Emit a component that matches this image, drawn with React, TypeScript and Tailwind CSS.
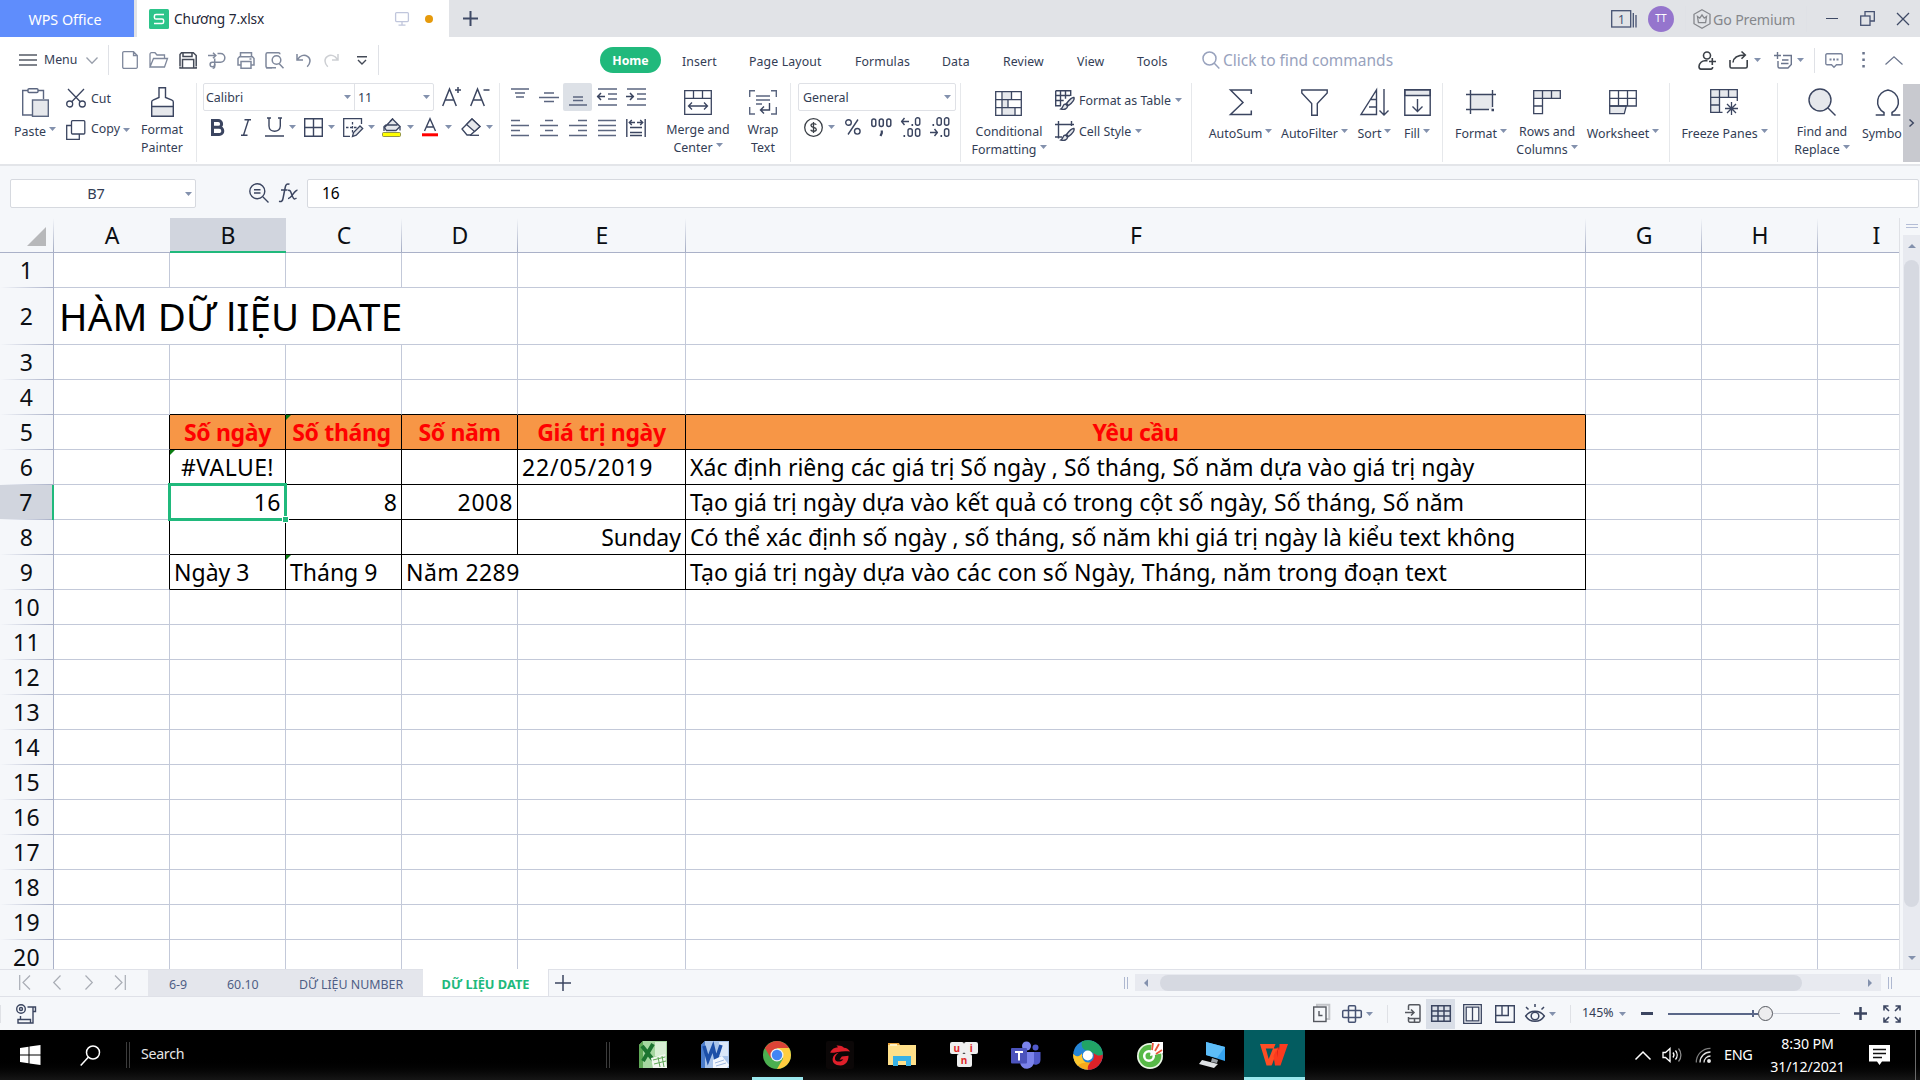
import type { ReactNode } from "react";

/* ---------- shared bits ---------- */

function Icon({ w, h, c = "#3b4560", sw = 1.3, children }: { w: number; h: number; c?: string; sw?: number; children: ReactNode }) {
  return (
    <svg width={w} height={h} viewBox={`0 0 ${w} ${h}`} fill="none" stroke={c} strokeWidth={sw} className="block shrink-0 overflow-visible">
      {children}
    </svg>
  );
}

function Caret() {
  return (
    <svg width="7" height="4" viewBox="0 0 7 4" className="block shrink-0" fill="#8391ad">
      <path d="M0 0h7L3.5 4z" />
    </svg>
  );
}

function VLine({ className = "" }: { className?: string }) {
  return <div className={`w-px shrink-0 bg-[#dfe1e6] ${className}`} />;
}

/* ---------- title bar ---------- */

function TitleBar() {
  return (
    <div className="flex h-[37px] bg-[#e1e3e7]">
      <div className="flex w-[134px] items-center justify-center bg-[#5f8dfc] pr-[4px] pt-[2px] text-[14.3px] text-white">WPS Office</div>
      <div className="ml-[3px] flex w-[312px] items-center bg-white pl-[12px]">
        <svg width="20" height="20" viewBox="0 0 20 20" className="block">
          <rect width="20" height="20" rx="1.5" fill="#2cc48a" />
          <path d="M15 5.5H7a1.6 1.6 0 0 0-1.6 1.6v1.3A1.6 1.6 0 0 0 7 10h6a1.6 1.6 0 0 1 1.6 1.6v1.3a1.6 1.6 0 0 1-1.6 1.6H5" fill="none" stroke="#fff" strokeWidth="1.5" />
        </svg>
        <span className="ml-[5px] w-[221px] pt-[2px] text-[13.7px] text-[#1f2738] tracking-[-0.08px]">Chương 7.xlsx</span>
        <Icon w={14} h={14} c="#c0c6dc">
          <rect x=".6" y=".6" width="12.8" height="9" rx="1" />
          <path d="M7 10v3M3.500 13.200h7" />
        </Icon>
        <span className="ml-[16px] size-[8px] rounded-full bg-[#e69a0b]" />
      </div>
      <div className="flex items-center pl-[14px]">
        <Icon w={15} h={15} c="#3f4a66" sw={2}>
          <path d="M7.500 0v15M0 7.500h15" />
        </Icon>
      </div>
      <div className="ml-auto flex items-center">
        <svg width="26" height="18" viewBox="0 0 26 18" className="block" fill="none" stroke="#465272" strokeWidth="1.300">
          <rect x=".7" y=".7" width="19" height="16.300" />
          <path d="M22.300 3v14.500M25 5v12.500" />
          <text x="7" y="13.500" fontSize="12" fill="#465272" stroke="none">1</text>
        </svg>
        <span className="ml-[11px] flex size-[26px] items-center justify-center rounded-full bg-[#9575cd] text-[10px] text-white">TT</span>
        <VLine className="ml-[11px] h-[25px] bg-[#c6c8cd]" />
        <span className="ml-[7px]">
          <Icon w={18} h={20} c="#85878c">
            <path d="M9 .8l8 4.500v9.400l-8 4.500-8-4.500V5.300z" />
            <path d="M4.500 7.500l2.300 1.700L9 6l2.200 3.200 2.300-1.700-.9 6.200H5.400z" />
          </Icon>
        </span>
        <span className="ml-[2px] w-[81px] whitespace-nowrap pt-[2px] text-[14.200px] text-[#85878c] tracking-[-0.15px]">Go Premium</span>
        <VLine className="ml-[12px] h-[26px] bg-[#c6c8cd]" />
        <div className="ml-[19px] h-[1.500px] w-[12px] bg-[#3f4a66]" />
        <span className="ml-[22px]">
          <Icon w={15} h={15} c="#465272">
            <rect x=".7" y="5" width="9.300" height="9.300" />
            <path d="M5 5V.7h9.300V10H10" />
          </Icon>
        </span>
        <span className="ml-[22px] mr-[11px]">
          <Icon w={12} h={12} c="#3f4a66">
            <path d="M0 0l12 12M12 0L0 12" />
          </Icon>
        </span>
      </div>
    </div>
  );
}

/* ---------- menu row ---------- */

function QuickIcon({ children }: { children: ReactNode }) {
  return <span className="flex w-[29px] shrink-0 justify-center">{children}</span>;
}

const G = "#7f889c";

function MenuRow() {
  return (
    <div className="flex h-[46px] items-center bg-white text-[12.300px] text-[#333d55]">
      <span className="ml-[19px]">
        <Icon w={18} h={12} c="#555b66">
          <path d="M0 1h18M0 6h18M0 11h18" />
        </Icon>
      </span>
      <span className="ml-[7px] w-[36px] pt-[1px]">Menu</span>
      <span className="ml-[6px]">
        <Icon w={12} h={7} c="#9aa0ac">
          <path d="M.5 .5L6 6.300 11.500.5" />
        </Icon>
      </span>
      <VLine className="ml-[10px] mr-[6px] h-[30px]" />
      <QuickIcon>
        <Icon w={16} h={18} c={G}>
          <path d="M2 .7h9.500L15.300 4.500V16a1.200 1.200 0 0 1-1.200 1.300H2A1.200 1.200 0 0 1 .7 16V2A1.200 1.200 0 0 1 2 .7zM11.500 1v3.500h3.500" />
        </Icon>
      </QuickIcon>
      <QuickIcon>
        <Icon w={19} h={16} c={G}>
          <path d="M1 15V2.200A1.500 1.500 0 0 1 2.500.7H6L8 3h7.500v3.500M1 15L4.500 6.500h14L15.500 15z" />
        </Icon>
      </QuickIcon>
      <QuickIcon>
        <Icon w={18} h={17} c="#444a57" sw={1.500}>
          <path d="M1 14V2.500L2.500.8h11.800l2.900 2.700V14M4 1v3.500h9V1M3.500 16V7.500h11.200V16zM1 14.500V16h16.200v-1.500" />
        </Icon>
      </QuickIcon>
      <QuickIcon>
        <Icon w={18} h={17} c={G} sw={1.500}>
          <path d="M0 3.500h7.500M5 .8l2.800 2.700L5 6.300M9.500 1.500h3a4.300 4.300 0 0 1 0 8.700H4.300a2.300 2.300 0 1 0 2.400 2.300V6.500" />
          <path d="M6.700 12v2.300c0 1-.5 2-2 2" />
        </Icon>
      </QuickIcon>
      <QuickIcon>
        <Icon w={18} h={17} c={G} sw={1.500}>
          <path d="M3.500 4.500V.8h11v3.700M4 13H1V6.500L2.500 4.800h13L17 6.500V13h-3M4 9.500h10v6.700H4zM12.500 7h2" />
        </Icon>
      </QuickIcon>
      <QuickIcon>
        <Icon w={19} h={17} c={G} sw={1.500}>
          <path d="M7 15.800H2.500A1.500 1.500 0 0 1 1 14.300V2.200A1.500 1.500 0 0 1 2.500.8h11A1.500 1.500 0 0 1 15 2.200" />
          <circle cx="11.500" cy="8" r="4.300" />
          <path d="M14 11.500l4.500 4.800M1 15.800h10" />
        </Icon>
      </QuickIcon>
      <QuickIcon>
        <Icon w={15} h={15} c={G} sw={1.500}>
          <path d="M1 1v6h6M1.300 6.800C4 2.500 8 1.300 11.500 3.300c3.500 2.300 3.300 7-.3 10.500" />
        </Icon>
      </QuickIcon>
      <span className="flex w-[26px] justify-center">
        <Icon w={15} h={15} c="#cdcfd3" sw={1.500}>
          <path d="M14 1v6H8M13.700 6.800C11 2.500 7 1.300 3.500 3.300 0 5.600.2 10.300 3.800 13.800" />
        </Icon>
      </span>
      <span className="ml-[13px]">
        <Icon w={10} h={9} c="#444a57" sw={1.400}>
          <path d="M0 .8h10M1 4l4 4 4-4" />
        </Icon>
      </span>
      <VLine className="ml-[11px] h-[30px]" />

      <span className="ml-[221px] flex h-[26px] w-[61px] items-center justify-center rounded-full bg-[#20b97c] pt-[2px] text-[12.300px] font-bold text-white">Home</span>
      <div className="ml-[21px] flex pt-[4px] tracking-[0.01em]">
        <span className="w-[67px]">Insert</span>
        <span className="w-[106px]">Page Layout</span>
        <span className="w-[87px]">Formulas</span>
        <span className="w-[61px]">Data</span>
        <span className="w-[74px]">Review</span>
        <span className="w-[60px]">View</span>
        <span className="w-[65px]">Tools</span>
      </div>
      <Icon w={18} h={18} c="#98a2bd" sw={1.500}>
        <circle cx="7.500" cy="7.500" r="6.500" />
        <path d="M12.300 12.300l5 5.300" />
      </Icon>
      <span className="ml-[3px] whitespace-nowrap pt-[1px] text-[15.500px] text-[#98a2bd]">Click to find commands</span>

      <div className="ml-auto flex items-center">
        <Icon w={18} h={19} c="#3b4047" sw={1.600}>
          <circle cx="9" cy="4.500" r="3.500" />
          <path d="M9.500 9.800H7.500A6 6 0 0 0 1 15.500c0 1.800.5 2.600 2 2.600h10c1 0 1.600-.6 1.600-2M14.300 7v7M11 10.500h7" />
        </Icon>
        <span className="ml-[13px]">
          <Icon w={20} h={18} c="#3b4047" sw={1.600}>
            <path d="M1 9v6.500C1 16.600 1.500 17 2.500 17h14c1 0 1.700-.5 1.700-1.500V9M4 11.500C4.500 6 9 4 16 4M12.500.5L16.300 4l-3.800 3.800" />
          </Icon>
        </span>
        <span className="ml-[5px]"><Caret /></span>
        <span className="ml-[13px]">
          <Icon w={19} h={17} c="#6a748c" sw={1.400}>
            <path d="M3.500 0v7M0 3.500h7M9 3.500h8.300v9L14 16H5.500A1.500 1.500 0 0 1 4 14.500V9M8 8h6.500M7 11.500h7.500" />
          </Icon>
        </span>
        <span className="ml-[4px]"><Caret /></span>
        <VLine className="ml-[10px] h-[25px]" />
        <span className="ml-[10px]">
          <Icon w={18} h={15} c="#7a849c" sw={1.400}>
            <path d="M2 .8h14a1.200 1.200 0 0 1 1.200 1.200v8.500a1.200 1.200 0 0 1-1.200 1.200h-4.500L9 14.200l-2.500-2.500H2A1.200 1.200 0 0 1 .8 10.500V2A1.200 1.200 0 0 1 2 .8z" />
            <path d="M4.500 6.500h2M8 6.500h2M11.500 6.500h2" strokeWidth="1.800" />
          </Icon>
        </span>
        <span className="ml-[19px]">
          <svg width="3" height="16" viewBox="0 0 3 16" fill="#6a748c" className="block">
            <path d="M.3 0h2.500v2.500H.3zM.3 6.500h2.500v2.500H.3zM.3 13h2.500v2.500H.3z" />
          </svg>
        </span>
        <span className="ml-[20px] mr-[17px]">
          <Icon w={18} h={9} c="#6a748c" sw={1.200}>
            <path d="M.5 8.500L9 .8l8.500 7.700" />
          </Icon>
        </span>
      </div>
    </div>
  );
}

/* ---------- ribbon ---------- */

function Big({ w, icon, lines, caret = true, pad = "pt-0" }: { w: string; icon: ReactNode; lines: string[]; caret?: boolean; pad?: string }) {
  return (
    <div className={`flex shrink-0 flex-col items-center ${w}`}>
      <div className="flex h-[38px] items-center justify-center">{icon}</div>
      <div className={`flex flex-col items-center ${pad}`}>
        {lines.map((t, i) => (
          <div key={t} className={`flex items-center whitespace-nowrap leading-[17px] ${i === 0 ? "h-[17px]" : "h-[18px] pt-[1px]"}`}>
            {t}
            {caret && i === lines.length - 1 && <span className="mb-[5px] ml-[3px]"><Caret /></span>}
          </div>
        ))}
      </div>
    </div>
  );
}

const D = "#3b4560";
const L = "#e6e8ec";

function FontGroup() {
  return (
    <div className="w-[303px] shrink-0 border-r border-[#e6e8eb] pl-[6px]">
      <div className="flex h-[28px] items-center">
        <div className="flex h-[28px] w-[231px] rounded-[2px] border border-[#dfe1e6]">
          <div className="flex w-[151px] items-center justify-between border-r border-[#dfe1e6] pl-[2px] pr-[3px]"><span className="pt-[3px]">Calibri</span><Caret /></div>
          <div className="flex flex-1 items-center justify-between pl-[3px] pr-[3px]"><span className="pt-[3px]">11</span><Caret /></div>
        </div>
        <span className="ml-[8px]">
          <Icon w={20} h={20} sw={1.500}>
            <path d="M.7 19L7.500 2l6.800 17M3.300 13h8.500M16 0v6M13 3h6" />
          </Icon>
        </span>
        <span className="ml-[8px]">
          <Icon w={20} h={20} sw={1.500}>
            <path d="M.7 19L7.500 2l6.800 17M3.300 13h8.500M13.500 3h6" />
          </Icon>
        </span>
      </div>
      <div className="mt-[6px] flex h-[20px] items-center">
        <span className="ml-[7px]">
          <Icon w={15} h={17} sw={3}>
            <path d="M2.500 1.500h5.700a3.400 3.400 0 0 1 0 6.800H2.500zM2.500 8.300h6.700a3.600 3.600 0 0 1 0 7.200H2.500z" />
          </Icon>
        </span>
        <span className="ml-[16px]">
          <Icon w={10} h={17} sw={1.400}>
            <path d="M3.500.7H10M0 16.300h6.500M7.500.7l-5 15.600" />
          </Icon>
        </span>
        <span className="ml-[14px]">
          <Icon w={19} h={20} sw={1.400}>
            <path d="M2 1h4M13 1h4M4 1v8c0 7 11.300 7 11.300 0V1M0 19h19" />
          </Icon>
        </span>
        <span className="ml-[5px] w-[15px]"><Caret /></span>
        <Icon w={19} h={19} sw={1.400}>
          <path d="M.7.700h17.600v17.600H.7zM9.500.7v17.600M.7 9.500h17.600" />
        </Icon>
        <span className="ml-[5px] w-[15px]"><Caret /></span>
        <Icon w={20} h={19} sw={1.300}>
          <path d="M18.500 6V.7H.7v17.600H7" />
          <path d="M9.500 4v11M3 9.500h11" strokeDasharray="2.500 1.500" />
          <path d="M9.500 18.500l1-4L17 8l2.700 2.500-6.500 6.700z" fill={L} />
        </Icon>
        <span className="ml-[5px] w-[14px]"><Caret /></span>
        <Icon w={20} h={19} sw={1.300}>
          <path d="M2.500 9.500L10.500 1l7.500 7.500-4 4H4.500zM5 7h10.500" fill={L} />
          <path d="M8 3.500L11 .5M18 8.500v4M2 13V8.500L4.500 6.500" />
          <rect x=".5" y="14.500" width="18" height="4" rx="1" fill="#ffff00" stroke="#777a3a" strokeWidth=".8" />
        </Icon>
        <span className="ml-[5px] w-[15px]"><Caret /></span>
        <Icon w={16} h={19} sw={1.400}>
          <path d="M2.500 13L8 .8 13.500 13M4.500 9h7" />
          <path d="M0 16.800h16" stroke="#ff0000" strokeWidth="3" />
        </Icon>
        <span className="ml-[7px] w-[16px]"><Caret /></span>
        <Icon w={20} h={18} sw={1.300}>
          <path d="M1 11L11 1l8 7.500L9.500 17H6z" />
          <path d="M5.500 6.500L11 1l8 7.500-5.500 5z" fill={L} />
          <path d="M9 17.300h9" />
        </Icon>
        <span className="ml-[5px]"><Caret /></span>
      </div>
    </div>
  );
}

function AlignCell({ on = false, children }: { on?: boolean; children: ReactNode }) {
  return <span className={on ? "flex h-[28px] w-[29px] items-center justify-center rounded-[2px] bg-[#dde1e7]" : "flex h-[28px] w-[29px] items-center justify-center"}>{children}</span>;
}

const A = "#5b6680";

function AlignGroup() {
  return (
    <div className="flex w-[291px] shrink-0 border-r border-[#e6e8eb] pl-[5px]">
      <div className="w-[155px]">
        <div className="flex h-[28px]">
          <AlignCell><Icon w={18} h={18} c={A} sw={1.500}><path d="M0 1h18M4 5h10M5 9h8" /></Icon></AlignCell>
          <AlignCell><Icon w={20} h={18} c={A} sw={1.500}><path d="M5 5h10M0 9.500h20M5 13.500h10" /></Icon></AlignCell>
          <AlignCell on><Icon w={18} h={18} c={A} sw={1.500}><path d="M4 9h10M4 12.500h10M0 17h18" /></Icon></AlignCell>
          <AlignCell><Icon w={20} h={18} c={A} sw={1.500}><path d="M1 1h19M11 6h9M11 11h9M1 17h19" /><path d="M0 8.500h8M4 5L.7 8.500 4 12" stroke={D} /></Icon></AlignCell>
          <AlignCell><Icon w={20} h={18} c={A} sw={1.500}><path d="M1 1h19M11 6h9M11 11h9M1 17h19" /><path d="M0 8.500h8M4 5l3.300 3.500L4 12" stroke={D} /></Icon></AlignCell>
        </div>
        <div className="mt-[3px] flex h-[28px]">
          <AlignCell><Icon w={18} h={18} c={A} sw={1.500}><path d="M0 1.500h9M0 6.500h18M0 11.500h9M0 16.500h18" /></Icon></AlignCell>
          <AlignCell><Icon w={18} h={18} c={A} sw={1.500}><path d="M5 1.500h8M0 6.500h18M5 11.500h8M0 16.500h18" /></Icon></AlignCell>
          <AlignCell><Icon w={18} h={18} c={A} sw={1.500}><path d="M9 1.500h9M0 6.500h18M9 11.500h9M0 16.500h18" /></Icon></AlignCell>
          <AlignCell><Icon w={18} h={18} c={A} sw={1.500}><path d="M0 1.500h18M0 6.500h18M0 11.500h18M0 16.500h18" /></Icon></AlignCell>
          <AlignCell><Icon w={20} h={18} c={D} sw={1.400}><path d="M.8 0v18M19.200 0v18M4 8.500h12M4 13.500h12M4 16.500h12M3.500 3.500H9M5.800 1L3.300 3.500 5.800 6M11 3.500h5.500M14.200 1l2.500 2.500L14.200 6" /></Icon></AlignCell>
        </div>
      </div>
      <Big w="w-[76px]" lines={["Merge and", "Center"]} icon={
        <Icon w={28} h={25}>
          <path d="M.7.700h26.600v23.600H.7zM.7 8.300h26.600M9.500.7v7.600M18.500.7v7.600M4.500 16h19M8 12.500L4.500 16 8 19.500M20 12.500l3.500 3.500-3.500 3.500" />
        </Icon>
      } />
      <Big w="w-[54px]" caret={false} lines={["Wrap", "Text"]} icon={
        <Icon w={28} h={25} c={A} sw={1.400}>
          <path d="M6 .7H.7V7M22 .7h5.300V7M.7 17v7H6M27.300 17v7H22M7 6h14M7 10h14M7 14h6" />
          <path d="M20.500 13v7H12M15 16.500L11.500 20l3.500 3.500" stroke={D} />
        </Icon>
      } />
    </div>
  );
}

function NumberGroup() {
  return (
    <div className="w-[170px] shrink-0 border-r border-[#e6e8eb] pl-[7px]">
      <div className="flex h-[28px] w-[158px] items-center justify-between rounded-[2px] border border-[#dfe1e6] pl-[4px] pr-[4px]"><span className="pt-[3px]">General</span><Caret /></div>
      <div className="mt-[6px] flex h-[20px] items-center text-[#3b4560]">
        <span className="ml-[6px]">
          <Icon w={19} h={19} c="#3b4047" sw={1.300}>
            <circle cx="9.500" cy="9.500" r="8.800" />
            <path d="M12.300 6.800C11.500 5.300 7 5 7 7.500c0 2.700 5.300 1.300 5.300 4 0 2.300-4.800 2.300-5.600.3M9.500 4v11" />
          </Icon>
        </span>
        <span className="ml-[5px]"><Caret /></span>
        <span className="ml-[10px]">
          <Icon w={16} h={16} sw={1.400}>
            <circle cx="3.500" cy="3.500" r="2.800" /><circle cx="12.300" cy="12.300" r="2.800" /><path d="M13 .5L3 15.500" />
          </Icon>
        </span>
        <span className="ml-[10px]">
          <Icon w={21} h={19} sw={1.500}>
            <rect x=".8" y="1" width="4" height="7.500" rx="2" /><rect x="8.300" y="1" width="4" height="7.500" rx="2" /><rect x="15.800" y="1" width="4" height="7.500" rx="2" />
            <path d="M10.800 12.500v2.500L9.500 18" strokeWidth="2.200" />
          </Icon>
        </span>
        <span className="ml-[9px]">
          <Icon w={21} h={20} sw={1.400}>
            <path d="M0 4.500h8M3.500 1L.7 4.500 3.500 8" /><path d="M10.500 8h1.600M2.500 19h1.600" strokeWidth="1.800" />
            <rect x="14.500" y=".8" width="4.300" height="7.500" rx="2" /><rect x="7" y="11.800" width="4.300" height="7.500" rx="2" /><rect x="14.500" y="11.800" width="4.300" height="7.500" rx="2" />
          </Icon>
        </span>
        <span className="ml-[8px]">
          <Icon w={21} h={20} sw={1.400}>
            <path d="M0 15.500h8M4.500 12l2.800 3.500L4.500 19" /><path d="M10.500 19h1.600M2.500 8h1.600" strokeWidth="1.800" />
            <rect x="14.500" y=".8" width="4.300" height="7.500" rx="2" /><rect x="7" y=".8" width="4.300" height="7.500" rx="2" /><rect x="14.500" y="11.800" width="4.300" height="7.500" rx="2" />
          </Icon>
        </span>
      </div>
    </div>
  );
}

function Ribbon() {
  return (
    <div className="flex h-[83px] overflow-hidden border-b-2 border-[#e3e5e9] bg-white pb-[2px] text-[12.400px] text-[#333d55]">
      {/* clipboard */}
      <div className="flex h-[79px] w-[197px] shrink-0 border-r border-[#e6e8eb] pl-[4px]">
        <Big w="w-[62px]" pad="pt-[2px]" lines={["Paste"]} icon={
          <Icon w={27} h={29} c="#5b6680" sw={1.400}>
            <path d="M10 27H.7V2.500H6M16 2.500h5.500V11" />
            <rect x="6" y=".7" width="10" height="3.800" rx="1" />
            <rect x="10.500" y="12" width="15.800" height="16.300" fill={L} />
          </Icon>
        } />
        <div className="flex w-[68px] flex-col">
          <div className="flex h-[20px] items-center pt-[10px]">
            <Icon w={20} h={20} sw={1.300}>
              <path d="M2 1l12.500 13M18 1L5.500 14" /><circle cx="3.700" cy="16" r="3" /><circle cx="16.300" cy="16" r="3" />
            </Icon>
            <span className="ml-[5px] pt-[2px]">Cut</span>
          </div>
          <div className="mt-[11px] flex h-[28px] items-center pt-[3px]">
            <Icon w={20} h={20} sw={1.300}>
              <path d="M5.500 5.500H.7v13.800h12.600V14" /><rect x="5.500" y=".7" width="13.300" height="13.300" rx="1" />
            </Icon>
            <span className="ml-[5px] mr-[3px]">Copy</span><Caret />
          </div>
        </div>
        <Big w="w-[56px]" caret={false} lines={["Format", "Painter"]} icon={
          <Icon w={23} h={30} sw={1.400}>
            <path d="M.7 19.500h21.600v9.800H.7z" fill={L} />
            <path d="M.7 19.500V15c0-1 .5-1.500 1.300-1.800L8 10.500V.7h6.500v9.800l6.500 2.700c.8.300 1.300.8 1.300 1.800v4.500" />
          </Icon>
        } />
      </div>

      <FontGroup />
      <AlignGroup />
      <NumberGroup />

      {/* styles */}
      <div className="flex w-[231px] shrink-0 border-r border-[#e6e8eb] pl-[2px]">
        <Big w="w-[92px]" pad="pt-[2px]" lines={["Conditional", "Formatting"]} icon={
          <div className="pr-[2px] pt-[3px]">
            <Icon w={27} h={25} sw={1.300}>
              <path d="M8 .7h8.500v8H8zM13 8.700h-6v8h6zM8 16.700h11.500v7.600H8z" fill={L} stroke="none" />
              <path d="M.7.700h25.600v23.600H.7zM.7 8.700h25.600M.7 16.700h25.600M7 .7v23.600M16.500.7v8M13 8.700v8M20 16.700v7.600" />
            </Icon>
          </div>
        } />
        <div className="flex flex-col">
          <div className="flex h-[34px] items-center">
            <Icon w={20} h={20} sw={1.400}>
              <path d="M.7.700h15V6M.7.700v15H6M.7 5.500H15M.7 10.500h8M5.500.7v15M10.500.7v8" />
              <path d="M19 7.500c-2-.5-6 4-7.500 6l2 2C15.500 14 20 10 19 7.500zM10.500 14c-3 0-2.500 4-4.500 5 3 1 6.500 0 6.500-3z" fill={L} />
            </Icon>
            <span className="ml-[4px] mr-[4px] whitespace-nowrap pt-[2px]">Format as Table</span><Caret />
          </div>
          <div className="flex h-[28px] items-center">
            <Icon w={20} h={20} sw={1.400}>
              <path d="M0 3.500h19M3.500 0v17.500M0 16h7M16.500 0v5" />
              <path d="M19 7.500c-2-.5-6 4-7.500 6l2 2C15.500 14 20 10 19 7.500zM10.500 14c-3 0-2.500 4-4.500 5 3 1 6.500 0 6.500-3z" fill={L} />
            </Icon>
            <span className="ml-[4px] mr-[4px] whitespace-nowrap pt-[2px]">Cell Style</span><Caret />
          </div>
        </div>
      </div>

      {/* editing */}
      <div className="flex w-[251px] shrink-0 border-r border-[#e6e8eb] pl-[13px]">
        <Big w="w-[71px]" pad="pt-[4px]" lines={["AutoSum"]} icon={<Icon w={23} h={27} sw={1.500}><path d="M22.300 5V1H1.500L14 13.500 1.500 25.500h20.800v-4" /></Icon>} />
        <Big w="w-[77px]" pad="pt-[4px]" lines={["AutoFilter"]} icon={<Icon w={27} h={27} sw={1.400}><path d="M.8 1h25.400v3L16.300 14.500v11.800h-5.600V14.500L.8 4z" /></Icon>} />
        <Big w="w-[43px]" pad="pt-[4px]" lines={["Sort"]} icon={<Icon w={29} h={27} sw={1.400}><path d="M16.500 1v24.500H1zM13.500 10.500h3M9 18h7.500M24 0v26M19.500 21.500l4.500 4.500 4.500-4.500M11 10.500h5" /></Icon>} />
        <Big w="w-[42px]" pad="pt-[4px]" lines={["Fill"]} icon={<Icon w={27} h={27} sw={1.400}><path d="M.8.800h25.400v5.700H.8z" fill={L} /><path d="M.8.800h25.400v25.400H.8zM13.500 10v12M8.500 17.500l5 5 5-5" /></Icon>} />
      </div>

      {/* cells */}
      <div className="flex w-[227px] shrink-0 border-r border-[#e6e8eb] pl-[2px]">
        <Big w="w-[72px]" pad="pt-[4px]" lines={["Format"]} icon={<Icon w={30} h={24} sw={1.400}><path d="M4.500 4.500h22v14.800h-22z" fill={L} stroke="none" /><path d="M0 4.500h30M4.500 0v24M26.500 0v17M0 19.500h23" /><path d="M25.500 20h2.500" strokeWidth="2.500" /></Icon>} />
        <Big w="w-[60px]" pad="pt-[2px]" lines={["Rows and", "Columns"]} icon={<Icon w={28} h={24} sw={1.300}><path d="M.7.700h26.600v7.600H.7z" fill={L} /><path d="M.7 8.300v15.400h8.800V.7M.7 16h8.800M18.500.7v7.600" /></Icon>} />
        <Big w="w-[92px]" pad="pt-[4px]" lines={["Worksheet"]} icon={<Icon w={28} h={24} sw={1.300}><path d="M.7 16h16.600l-2 7.700H.7z" fill={L} /><path d="M.7 16V.7h26.600V16H.7M.7 8.300h26.600M9.500.7V16M18.500.7V16" /></Icon>} />
      </div>

      {/* view */}
      <div className="flex w-[108px] shrink-0 border-r border-[#e6e8eb]">
        <Big w="w-[109px]" pad="pt-[4px]" lines={["Freeze Panes"]} icon={<Icon w={29} h={26} sw={1.300}><path d="M.7.700h26.600v7.600H9.500v15H.7z" fill={L} /><path d="M.7 8.300h9M.7 16h9M9.500.7v8M18.500.7v7.600M27.300 8v4M9.500 23.300h3" /><path d="M21.500 13v13M15 19.500h13M17 15l9 9M26 15l-9 9" /></Icon>} />
      </div>

      {/* search and symbols */}
      <div className="flex w-[125px] shrink-0 overflow-hidden pl-[1px]">
        <Big w="w-[86px]" pad="pt-[2px]" lines={["Find and", "Replace"]} icon={<Icon w={28} h={28} sw={1.400}><circle cx="12" cy="12" r="11" fill={L} /><path d="M19.500 19.500l8 8" /></Icon>} />
        <div className="-ml-[3px] w-[42px] shrink-0 overflow-hidden">
          <div className="flex h-[38px] items-center pl-[13px]">
            <Icon w={26} h={27} sw={1.500}><path d="M.7 26h8.300v-2.500A12 12 0 0 1 13 1a12 12 0 0 1 4 22.500V26h8.300" /></Icon>
          </div>
          <div className="pt-[4px] leading-[17px]">Symbo</div>
        </div>
      </div>
      <div className="mt-[1px] flex h-[78px] w-[17px] shrink-0 items-center justify-center bg-[#c8c9cf]">
        <Icon w={5} h={8} sw={1.400}><path d="M.5.500L4.300 4 .5 7.500" /></Icon>
      </div>
    </div>
  );
}

/* ---------- formula bar ---------- */

function FormulaBar() {
  return (
    <div className="flex h-[52px] items-start bg-[#f5f7fa] pt-[13px]">
      <div className="ml-[10px] flex h-[29px] w-[186px] items-center rounded-[2px] border border-[#d6d9df] bg-white pr-[3px] text-[14.500px] text-[#333d55]">
        <span className="flex-1 pr-[4px] pt-[1px] text-center">B7</span>
        <Caret />
      </div>
      <span className="ml-[53px] mt-[4px]">
        <Icon w={20} h={20} sw={1.400}>
          <circle cx="8.300" cy="8.300" r="7.500" /><path d="M5 6.800h6.500M5 10h6.500M14 14l5.500 5.500" />
        </Icon>
      </span>
      <span className="ml-[10px] mt-[4px]">
        <Icon w={19} h={20} sw={1.500}>
          <path d="M10.500 1.300C8 .3 6.800 1.500 6.300 4L4 15.500c-.5 2.500-1.500 3.500-4 2.800M2 7h6.500M9 7.500c3-1 3 3 4.500 6s2 3 4 1.500M18.500 7.300c-3-.5-6 8.500-9.500 8.200" />
        </Icon>
      </span>
      <div className="ml-[9px] flex h-[29px] w-[1612px] items-center rounded-[2px] border border-[#d6d9df] bg-white pl-[14px] text-[15.500px] text-black">16</div>
    </div>
  );
}

/* ---------- sheet ---------- */

const COLS: [string, string][] = [
  ["A", "w-[116px]"],
  ["B", "w-[116px]"],
  ["C", "w-[116px]"],
  ["D", "w-[116px]"],
  ["E", "w-[168px]"],
  ["F", "w-[900px]"],
  ["G", "w-[116px]"],
  ["H", "w-[116px]"],
  ["I", "w-[117px]"],
];

type CellData = { t?: string; cls?: string; flag?: boolean; w?: string; skip?: boolean; head?: boolean };

const HEAD = "bg-[#f79646] justify-center font-bold tracking-[-0.35px]";

const CELLS: Record<string, CellData> = {
  A2: { t: "HÀM DỮ lIẸ\u0303U DATE", cls: "text-[38.5px] pl-[5px] pt-[1px] tracking-[0.15px]", w: "w-[464px]" },
  B2: { skip: true },
  C2: { skip: true },
  D2: { skip: true },
  B5: { t: "Số ngày", cls: HEAD, head: true },
  C5: { t: "Số tháng", cls: `${HEAD} pr-[4px]`, flag: true, head: true },
  D5: { t: "Số năm", cls: HEAD, head: true },
  E5: { t: "Giá trị ngày", cls: HEAD, head: true },
  F5: { t: "Yêu cầu", cls: HEAD, head: true },
  B6: { t: "#VALUE!", cls: "justify-center tracking-[0.4px]", flag: true },
  E6: { t: "22/05/2019", cls: "pl-[4px] tracking-[0.9px]" },
  F6: { t: "Xác định riêng các giá trị Số ngày , Số tháng, Số năm dựa vào giá trị ngày", cls: "pl-[4px]" },
  B7: { t: "16", cls: "justify-end pr-[4px] tracking-[0.5px]" },
  C7: { t: "8", cls: "justify-end pr-[4px]" },
  D7: { t: "2008", cls: "justify-end pr-[4px] tracking-[0.7px]" },
  F7: { t: "Tạo giá trị ngày dựa vào kết quả có trong cột số ngày, Số tháng, Số năm", cls: "pl-[4px] tracking-[0.035px]" },
  E8: { t: "Sunday", cls: "justify-end pr-[4px]" },
  F8: { t: "Có thể xác định số ngày , số tháng, số năm khi giá trị ngày là kiểu text không", cls: "pl-[4px]" },
  B9: { t: "Ngày 3", cls: "pl-[4px]" },
  C9: { t: "Tháng 9", cls: "pl-[4px]", flag: true },
  D9: { t: "Năm 2289", cls: "pl-[4px] tracking-[0.4px]", w: "w-[284px]" },
  E9: { skip: true },
  F9: { t: "Tạo giá trị ngày dựa vào các con số Ngày, Tháng, năm trong đoạn text", cls: "pl-[4px] tracking-[0.07px]" },
};

function borderClass(col: string, row: number) {
  const inCols = "BCDEF".includes(col);
  const bottom = inCols && row >= 4 && row <= 9 ? "border-b-black" : "border-b-[#c3c9d9]";
  const right = "ABCDEF".includes(col) && row >= 5 && row <= 9 ? "border-r-black" : "border-r-[#c3c9d9]";
  return `${bottom} ${right}`;
}

function Cell({ col, row, width }: { col: string; row: number; width: string }) {
  const d = CELLS[`${col}${row}`] ?? {};
  if (d.skip) return null;
  const size = d.w === "w-[464px]" ? "" : "text-[23px]";
  const color = d.head ? "text-[#ff0000]" : "text-black";
  return (
    <div className={`relative flex shrink-0 items-center whitespace-nowrap border-b border-r leading-none ${color} ${size} ${d.w ?? width} ${borderClass(col, row)} ${d.cls ?? ""}`}>
      {d.t}
      {d.flag && (
        <svg width="5" height="5" viewBox="0 0 5 5" className="absolute left-0 top-0" fill="#0a7d12"><path d="M0 0h5L0 5z" /></svg>
      )}
      {col === "B" && row === 7 && (
        <>
          <span className="absolute -left-[2px] -top-[2px] z-10 h-[38px] w-[119px] border-[3px] border-[#20b97c]" />
          <span className="absolute -bottom-[4px] -right-[4px] z-20 size-[7px] border border-white bg-[#20b97c]" />
        </>
      )}
    </div>
  );
}

function Sheet() {
  return (
    <div className="flex h-[751px] bg-[#f5f7fa]">
      <div className="h-[751px] w-[1899px] overflow-hidden">
        <div className="flex h-[35px] text-[23px] leading-none text-[#0c0f14]">
          <div className="flex w-[54px] shrink-0 items-end justify-end border-b border-b-[#aab1c8] pb-[6px] pr-[8px]">
            <svg width="19" height="19" viewBox="0 0 19 19" className="block" fill="#b7b8ba"><path d="M19 0v19H0z" /></svg>
          </div>
          {COLS.map(([c, w]) => (
            <div key={c} className={`relative flex shrink-0 items-center justify-center border-b pt-[1px] ${w} ${c === "B" ? "border-b-2 border-b-[#20b97c] bg-[#d1d5de]" : "border-b-[#aab1c8]"}`}>
              {c}
              {c !== "B" && c !== "C" && <span className="absolute left-[-1px] top-0 h-full w-px bg-linear-to-b from-[#f5f7fa] to-[#a3abc2]" />}
            </div>
          ))}
        </div>
        {Array.from({ length: 20 }, (_, i) => i + 1).map((r) => (
          <div key={r} className={r === 2 ? "flex h-[57px]" : "flex h-[35px]"}>
            <div className={`relative flex w-[54px] shrink-0 items-center justify-center text-[23px] leading-none tracking-[0.3px] text-[#0c0f14] ${r === 7 ? "border-r-2 border-r-[#20b97c] bg-[#d1d5de]" : "border-r border-r-[#aab1c8]"}`}>
              {r}
              <span className="absolute bottom-0 left-0 h-px w-full bg-linear-to-r from-[#f5f7fa] to-[#aab1c8]" />
            </div>
            <div className="flex bg-white">
              {COLS.map(([c, w]) => (
                <Cell key={c} col={c} row={r} width={w} />
              ))}
            </div>
          </div>
        ))}
      </div>
      <div className="w-px bg-[#dfe1e6]" />
      <div className="ml-[3px] flex w-[17px] flex-col items-center">
        <div className="mt-[6px] h-px w-[12px] bg-[#b4bdd6]" />
        <div className="mt-[2px] h-px w-[12px] bg-[#b4bdd6]" />
        <div className="mt-[7px] flex h-[734px] w-full flex-col items-center bg-[#e8eaf0] pt-[9px]">
          <svg width="8" height="4" viewBox="0 0 8 4" fill="#8391ad"><path d="M0 4h8L4 0z" /></svg>
          <div className="mt-[12px] h-[647px] w-[15px] rounded-full bg-[#d6d9e1]" />
          <svg width="8" height="4" viewBox="0 0 8 4" fill="#8391ad" className="mt-[49px]"><path d="M0 0h8L4 4z" /></svg>
        </div>
      </div>
    </div>
  );
}

/* ---------- sheet tabs ---------- */

function SheetTabs() {
  return (
    <div className="flex h-[28px] items-stretch border-b border-t border-[#dfe1e8] bg-[#f5f7fa] text-[12.400px] text-[#4f5e85]">
      <div className="flex w-[148px] items-center pb-[1px] pl-[19px]">
        <Icon w={12} h={15} c="#a9adb5" sw={1.200}><path d="M.7 0v15M11 .5L4 7.500l7 7" /></Icon>
        <span className="ml-[22px]"><Icon w={8} h={15} c="#a9adb5" sw={1.200}><path d="M7.500.5L.7 7.500l6.800 7" /></Icon></span>
        <span className="ml-[24px]"><Icon w={8} h={15} c="#a9adb5" sw={1.200}><path d="M.5.500l6.800 7-6.800 7" /></Icon></span>
        <span className="ml-[21px]"><Icon w={12} h={15} c="#a9adb5" sw={1.200}><path d="M11.300 0v15M1 .5l7 7-7 7" /></Icon></span>
      </div>
      <div className="flex w-[275px] items-center bg-[#e4e6ec] pt-[4px]">
        <span className="ml-[21px] w-[58px]">6-9</span>
        <span className="w-[72px]">60.10</span>
        <span className="whitespace-nowrap">DỮ LIỆU NUMBER</span>
      </div>
      <div className="-mt-px flex w-[126px] items-center justify-center whitespace-nowrap border-r border-[#dfe1e8] bg-white pt-[5px] text-[12.800px] font-bold text-[#20b97c]">DỮ LIỆU DATE</div>
      <span className="flex items-center pb-[1px] pl-[6px]"><Icon w={16} h={16} sw={1.500}><path d="M8 0v16M0 8h16" /></Icon></span>
      <div className="ml-auto flex items-center pb-[1px]">
        <div className="h-[12px] w-[4px] border-x border-[#aeb8d0]" />
        <div className="ml-[7px] flex h-[17px] w-[746px] items-center justify-between bg-[#e8eaf0] pl-[9px] pr-[9px]">
          <svg width="4" height="8" viewBox="0 0 4 8" fill="#8391ad"><path d="M4 0v8L0 4z" /></svg>
          <div className="mr-[54px] h-[16px] w-[642px] rounded-full bg-[#d6d9e1]" />
          <svg width="4" height="8" viewBox="0 0 4 8" fill="#8391ad"><path d="M0 0v8l4-4z" /></svg>
        </div>
        <div className="ml-[7px] mr-[28px] h-[12px] w-[4px] border-x border-[#aeb8d0]" />
      </div>
    </div>
  );
}

/* ---------- status bar ---------- */

function StatusBar() {
  return (
    <div className="flex h-[33px] items-center bg-[#f5f7fa] text-[12.400px] text-[#333d55]">
      <VLine className="h-[18px]" />
      <span className="ml-[15px]">
        <Icon w={20} h={20} sw={1.400}>
          <circle cx="5" cy="5" r="4.300" /><circle cx="5" cy="5" r="1.500" />
          <path d="M11.500 3h8v4.500H17V19H2v-3.500h12.500V19M17 7V3M4.500 12v3.500" />
        </Icon>
      </span>
      <div className="ml-auto flex items-center">
        <Icon w={17} h={19} c="#55585f" sw={1.400}>
          <path d="M4 2.500V.7h12.300V15H13" stroke="#c3c5c9" strokeWidth="2" /><rect x=".7" y="3" width="12.300" height="14.500" fill="#f5f7fa" /><path d="M6 7v4.500h3.500" />
        </Icon>
        <span className="ml-[12px]">
          <Icon w={20} h={18} c="#465272" sw={1.500}>
            <rect x="6.500" y=".7" width="7" height="16.600" rx="1" /><rect x=".7" y="5.500" width="18.600" height="7" rx="1" />
          </Icon>
        </span>
        <span className="ml-[4px]"><Caret /></span>
        <VLine className="ml-[14px] h-[18px]" />
        <span className="ml-[17px]">
          <Icon w={16} h={19} c="#55585f" sw={1.500}>
            <path d="M3.500 6V2A1.300 1.300 0 0 1 4.800.7h9A1.300 1.300 0 0 1 15 2v15a1.300 1.300 0 0 1-1.300 1.200h-9A1.300 1.300 0 0 1 3.500 17v-4M0 8.500h9M6 5.500l3 3-3 3M4 14.500h11M9.500 15v2.500" />
          </Icon>
        </span>
        <span className="ml-[5px] flex h-[30px] w-[29px] items-center justify-center bg-[#d9dee7]">
          <Icon w={20} h={17} sw={1.500}><path d="M.7.700h18.600v15.600H.7zM.7 6h18.600M.7 11h18.600M7 .7v15.600M13 .7v15.600" /></Icon>
        </span>
        <span className="ml-[8px]"><Icon w={19} h={20} sw={1.300}><path d="M.7.700h17.600v18.600H.7zM3.200 3.200h12.600v13.600H3.200zM9.500 3.200v13.600" /></Icon></span>
        <span className="ml-[13px]"><Icon w={20} h={18} sw={1.400}><path d="M.7.700h18.600v16.600H.7zM.7 10.500h12.600V.7M7 .7v9.800" /></Icon></span>
        <span className="ml-[10px]">
          <Icon w={20} h={19} sw={1.500}>
            <path d="M.7 12C5 5.500 15 5.500 19.300 12 15 19 5 19 .7 12zM10 0v3M1 3l2.500 2.500M19 3l-2.500 2.500" /><circle cx="10" cy="12" r="3.800" />
          </Icon>
        </span>
        <span className="ml-[4px]"><Caret /></span>
        <VLine className="ml-[14px] h-[18px]" />
        <span className="ml-[11px] w-[37px]">145%</span>
        <Caret />
        <div className="ml-[15px] h-[3px] w-[12px] bg-[#3b4560]" />
        <div className="ml-[15px] flex w-[172px] items-center">
          <div className="h-[2px] w-[84px] bg-[#5a6788]" />
          <div className="h-[7px] w-[2px] bg-[#5a6788]" />
          <div className="h-[2px] w-[4px] bg-[#5a6788]" />
          <div className="size-[15px] rounded-full border-[1.500px] border-[#55585f] bg-[#ededef]" />
          <div className="h-px flex-1 bg-[#ccd0da]" />
        </div>
        <span className="ml-[14px]"><Icon w={13} h={13} sw={2.500}><path d="M6.500 0v13M0 6.500h13" /></Icon></span>
        <span className="ml-[16px] mr-[19px]">
          <Icon w={18} h={18} sw={1.600}>
            <path d="M1 5.500V1h4.500M1 1l5 5M12.500 1H17v4.500M17 1l-5 5M17 12.500V17h-4.500M17 17l-5-5M5.500 17H1v-4.500M1 17l5-5" />
          </Icon>
        </span>
      </div>
    </div>
  );
}

/* ---------- taskbar ---------- */

function Task({ children, line = false, on = false }: { children: ReactNode; line?: boolean; on?: boolean }) {
  return (
    <div className={on ? "flex h-[50px] w-[61px] shrink-0 flex-col items-center bg-[#035c60]" : "flex h-[50px] w-[62.200px] shrink-0 flex-col items-center"}>
      <div className="flex h-[47px] items-center pt-[2px]">{children}</div>
      {(line || on) && <div className={on ? "h-[3px] w-full bg-[#9be8ee]" : "h-[3px] w-[51px] bg-[#9be8ee]"} />}
    </div>
  );
}

function Taskbar() {
  return (
    <div className="flex h-[50px] items-center bg-black bg-linear-to-b from-black via-black to-[#161616] text-white">
      <svg width="21" height="20" viewBox="0 0 21 20" fill="#fff" className="ml-[20px] block">
        <path d="M0 3l8.500-1.300v7.800H0zM9.500 1.500L20.500 0v9.500h-11zM0 10.500h8.500v7.800L0 17zM9.500 10.500h11V20l-11-1.500z" />
      </svg>
      <span className="ml-[39px]"><Icon w={21} h={21} c="#fff" sw={1.500}><circle cx="13" cy="7.500" r="6.500" /><path d="M8.500 12L.7 20.500" /></Icon></span>
      <div className="ml-[25px] h-[26px] w-[4px] border-x border-[#3c3c3c]" />
      <span className="ml-[11px] w-[465px] pb-[2px] text-[14.200px] text-[#e6e6e6] tracking-[-0.3px]">Search</span>
      <div className="h-[26px] w-[4px] border-x border-[#3c3c3c]" />
      <div className="ml-[12px] flex">
        <Task>
          <svg width="28" height="28" viewBox="0 0 28 28">
            <path d="M4 0h24v27H0V4z" fill="#a5d6a0" /><path d="M16 1h11v14H16z" fill="#d8efd4" /><path d="M0 4l4-4v27H0z" fill="#5fa857" />
            <path d="M3 5l12 15M14 3L4 20" stroke="#1c7430" strokeWidth="4" /><path d="M12 17l14-4 2 14H14z" fill="#f1f8ef" /><path d="M14 19l12-3M15 23l12-3M19 16l2 10M23 15l2 11" stroke="#5fa857" />
          </svg>
        </Task>
        <Task>
          <svg width="28" height="28" viewBox="0 0 28 28">
            <path d="M4 0h24v27H0V4z" fill="#a9c4ea" /><path d="M18 1h9v14h-9z" fill="#dbe7f8" /><path d="M0 4l4-4v27H0z" fill="#4a7ccb" />
            <path d="M3 5l4 14 5-13 3 13L20 4" stroke="#1c4fa8" strokeWidth="3.500" fill="none" /><path d="M12 19l9-4 7 9-2 3H12z" fill="#f3f7fd" /><path d="M14 22l9-3M15 25l10-3" stroke="#9db7df" />
          </svg>
        </Task>
        <Task line>
          <svg width="28" height="28" viewBox="0 0 28 28">
            <circle cx="14" cy="14" r="14" fill="#4caf50" />
            <path d="M1.900 7A14 14 0 0 1 26.100 7H14L8 17.500z" fill="#db4437" />
            <path d="M26.100 7A14 14 0 0 1 14 28L20.100 17.500 14 7z" fill="#ffcd40" />
            <circle cx="14" cy="14" r="6.500" fill="#f1f1f1" /><circle cx="14" cy="14" r="5.200" fill="#4285f4" />
          </svg>
        </Task>
        <Task>
          <svg width="28" height="28" viewBox="0 0 28 28">
            <rect width="28" height="28" rx="2" fill="#0b0707" />
            <path d="M4 11.500C6 8 8.500 6.500 12 6.300L10.500 4.500c3.500-.3 6 .6 7.500 2.300 2.500.2 4.500 1.500 6 3.700-4-.6-8-.5-12 .5-3.500.9-5 1-8 .5z" fill="#df1f2a" />
            <path d="M13 11.500c-3 2-4.300 4.200-4 6.500.4 3.300 6.500 3.600 8.300.2l-3.800.6 2.300-3.300 6.700-.7c.2 5.500-3 9.700-8 9.700-5.500 0-8.500-3-7.800-7 .4-2.700 2.500-5 6.300-6z" fill="#df1f2a" />
          </svg>
        </Task>
        <Task>
          <svg width="28" height="26" viewBox="0 0 28 26">
            <path d="M0 1h11l2 4H0z" fill="#e8a33d" /><path d="M0 3h28v20H0z" fill="#ffe08a" /><path d="M2 2h7v2H2z" fill="#fff3c4" /><path d="M5 14h18v10h-5v-5h-8v5H5z" fill="#38b1e6" />
          </svg>
        </Task>
        <Task>
          <div className="grid w-[29px] grid-cols-2 place-items-center text-[10px] font-bold leading-none text-[#e02a2a]">
            <span className="flex h-[12px] w-[14px] items-center justify-center rounded-[2px] bg-[#efefef] pb-[1px]">u</span>
            <span className="flex h-[12px] w-[14px] items-center justify-center rounded-[2px] bg-[#efefef]">i</span>
            <span className="col-span-2 flex h-[13px] w-[15px] items-center justify-center rounded-[2px] bg-[#efefef] pb-[1px]">n</span>
          </div>
        </Task>
        <Task>
          <svg width="30" height="28" viewBox="0 0 30 28">
            <circle cx="15.500" cy="5" r="4.500" fill="#7b83eb" /><circle cx="24.500" cy="6.500" r="3" fill="#5059c9" /><path d="M20 11h9.500v8a5 5 0 0 1-9.500 2z" fill="#5059c9" />
            <path d="M9 11h14v9.500A7 7 0 0 1 9 21z" fill="#7b83eb" /><rect y="7" width="16" height="15.500" rx="1" fill="#4b53bc" /><path d="M4 11h8M8 11v8.500" stroke="#fff" strokeWidth="2" />
          </svg>
        </Task>
        <Task>
          <svg width="30" height="30" viewBox="0 0 30 30">
            <circle cx="15" cy="15" r="14.800" fill="#2585d6" />
            <path d="M9 1.500A14.800 14.800 0 0 1 29.800 14.500C24 18.500 20 11 14 10.500 9.500 10 8 6 9 1.500z" fill="#21a366" />
            <path d="M29.800 14.500A14.800 14.800 0 0 1 14 29.800c-1.500-3.500 1-6 4-8.300 3.500-2.500 3-5 2.500-8.500 3 2.500 6 3.500 9.300 1.500z" fill="#de2128" />
            <path d="M.3 14A14.800 14.800 0 0 0 15 29.800c-.8-3 .5-5 2.500-7.500-6 1-9-2.500-8.500-8.800C5 18 2.500 17 .3 14z" fill="#f7a91b" />
            <path d="M5 26c-3-3-5-7-4.700-12C3 17 6 17.500 9 13.500c-.5 5 1 7.500 4 9C9 23 6.500 23.500 5 26z" fill="#fdc830" />
            <circle cx="14.800" cy="15.500" r="5" fill="#fff" />
          </svg>
        </Task>
        <Task>
          <svg width="27" height="28" viewBox="0 0 27 28">
            <circle cx="13" cy="15" r="13" fill="#e9f7e4" /><circle cx="13" cy="15" r="11.300" fill="#57b947" /><path d="M13 15L15 1h11v11z" fill="#fff" />
            <path d="M15 9l1-7M18 10l4-7M19 13l6-4" stroke="#e8563a" strokeWidth="1.800" /><circle cx="12" cy="15" r="4.800" fill="none" stroke="#fff" strokeWidth="2.500" />
          </svg>
        </Task>
        <Task>
          <svg width="27" height="26" viewBox="0 0 27 26">
            <path d="M7 0l19 5v14L7 13z" fill="#35a3f0" /><path d="M7 0l19 5-8 11-11-3z" fill="#5dbdf8" /><path d="M13 16l6 2-1 3-6-1z" fill="#9aa0a6" /><path d="M3 18l16 4-4 4-15-4z" fill="#dfe2e5" />
          </svg>
        </Task>
        <Task on>
          <svg width="28" height="22" viewBox="0 0 28 22">
            <path d="M9 18L15 6.500 17 3.500h3L21.500 16.500 15.500 21 14.500 13 12 21H8z" fill="#d92018" />
            <path d="M0 0h15.500l-1.800 4.500H5.800L8.700 15 13 4.500h5L11.500 21.500H6.500z" fill="#ff4d24" />
            <path d="M18 5.500h3.500l-2.500 8L19.500 0H28l-7.500 21.500H15L13.500 12l3-6.500.8 8z" fill="#fb3a1e" />
          </svg>
        </Task>
      </div>
      <div className="ml-auto flex items-center">
        <Icon w={16} h={9} c="#fff" sw={1.500}><path d="M.5 8.500L8 1l7.500 7.500" /></Icon>
        <span className="ml-[11px]">
          <Icon w={21} h={16} c="#fff" sw={1.300}>
            <path d="M1 5.500h2.500L8 1.500v13l-4.500-4H1zM11 5.500a4 4 0 0 1 0 5M13.500 3.500a7 7 0 0 1 0 9" /><path d="M16.500 1.500a10 10 0 0 1 0 13" stroke="#8a8a8a" />
          </Icon>
        </span>
        <span className="ml-[12px]">
          <Icon w={16} h={16} c="#e0e0e0" sw={1.300}>
            <path d="M1.300 15.500A14 14 0 0 1 15.500 1.300" stroke="#7d7d7d" /><path d="M5 15.500A10.500 10.500 0 0 1 15.500 5M9 15.500A6.500 6.500 0 0 1 15.500 9" /><circle cx="14" cy="14" r="1.300" fill="#fff" />
          </Icon>
        </span>
        <span className="ml-[13px] w-[30px] text-[14.500px] tracking-[-0.4px]">ENG</span>
        <div className="ml-[13px] flex w-[81px] flex-col items-center whitespace-nowrap text-[14.200px] leading-[23px] tracking-[-0.1px]">
          <span>8:30 PM</span>
          <span>31/12/2021</span>
        </div>
        <svg width="21" height="20" viewBox="0 0 21 20" className="ml-[21px] block">
          <path d="M0 0h21v16.500h-8L10.500 20 8 16.500H0z" fill="#fff" /><path d="M4 4.500h13M4 8.500h13M4 12.500h9" stroke="#111" strokeWidth="1.300" />
        </svg>
        <div className="ml-[25px] mr-[4px] h-[50px] w-px bg-[#6b6b6b]" />
      </div>
    </div>
  );
}

export default function App() {
  return (
    <div className="flex h-[1080px] w-[1920px] flex-col overflow-hidden bg-white font-['Noto_Sans','Open_Sans',sans-serif]">
      <TitleBar />
      <MenuRow />
      <Ribbon />
      <FormulaBar />
      <Sheet />
      <SheetTabs />
      <StatusBar />
      <Taskbar />
    </div>
  );
}
